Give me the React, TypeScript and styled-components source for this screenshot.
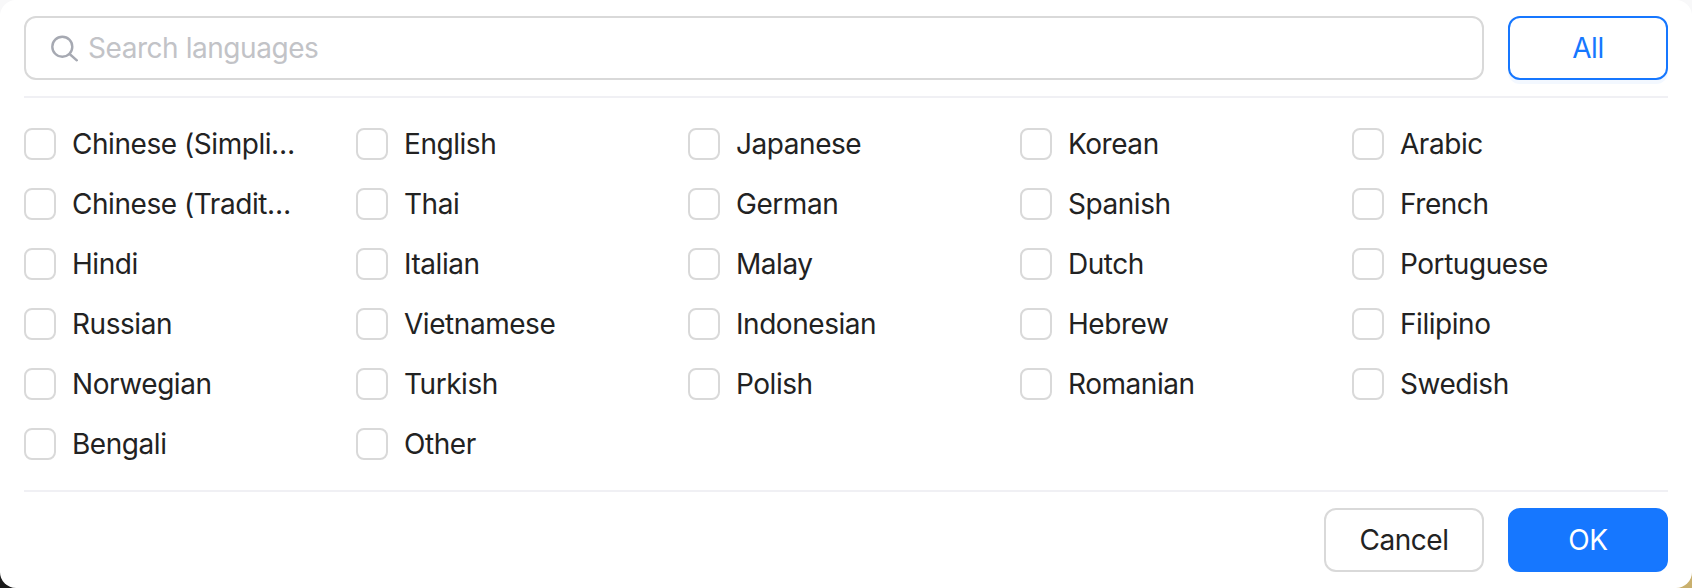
import React from "react";
import styled, { createGlobalStyle } from "styled-components";

const Global = createGlobalStyle`
  html, body { margin: 0; padding: 0; width: 1692px; height: 588px; overflow: hidden; background: #f8f8f9; }
  * { box-sizing: border-box; }
`;

const Backdrop = styled.div`
  position: relative;
  width: 1692px;
  height: 588px;
  background: #f8f8f9;
  overflow: hidden;
`;

const CornerLeft = styled.div`
  position: absolute; left: 0; bottom: 0; width: 24px; height: 24px; background: #1a1a1a;
`;
const CornerRight = styled.div`
  position: absolute; right: 0; bottom: 0; width: 24px; height: 24px; background: #c9b06e;
`;

const Dialog = styled.div`
  position: relative;
  width: 1692px;
  height: 588px;
  background: #fff;
  border-radius: 16px;
  padding: 16px 24px 0;
  font-family: Inter, "Liberation Sans", sans-serif;
  font-size: 28px;
  letter-spacing: -0.45px;
  color: #222;
`;

const SearchRow = styled.div`
  display: flex;
  gap: 24px;
  padding-bottom: 16px;
  border-bottom: 2px solid #f0f0f4;
`;

const SearchBox = styled.div`
  flex: 1;
  height: 64px;
  border: 2px solid #d9d9d9;
  border-radius: 12px;
  display: flex;
  align-items: center;
  padding: 0 24px;
  gap: 10px;
`;

const Placeholder = styled.span`
  color: #c2c3c7;
`;

const AllButton = styled.button`
  width: 160px;
  height: 64px;
  border: 2px solid #1677ff;
  border-radius: 12px;
  background: #fff;
  color: #1677ff;
  font: inherit;
  letter-spacing: inherit;
  box-shadow: 0 4px 0 rgba(22, 119, 255, 0.05);
`;

const Grid = styled.div`
  display: grid;
  grid-template-columns: repeat(5, 332px);
  grid-auto-rows: 60px;
  padding-top: 16px;
  height: 394px;
  border-bottom: 2px solid #f0f0f4;
`;

const Option = styled.label`
  display: flex;
  align-items: center;
  gap: 16px;
  min-width: 0;
  height: 60px;
`;

const Box = styled.span`
  flex: none;
  width: 32px;
  height: 32px;
  border: 2px solid #d9d9d9;
  border-radius: 8px;
  background: #fff;
`;

const Name = styled.span`
  width: 224px;
  white-space: nowrap;
  overflow: hidden;
  text-overflow: ellipsis;
`;

const Footer = styled.div`
  display: flex;
  justify-content: flex-end;
  gap: 24px;
  padding-top: 16px;
`;

const FooterButton = styled.button<{ $primary?: boolean }>`
  width: 160px;
  height: 64px;
  border-radius: 12px;
  font: inherit;
  letter-spacing: inherit;
  border: 2px solid ${(p) => (p.$primary ? "#1677ff" : "#d9d9d9")};
  background: ${(p) => (p.$primary ? "#1677ff" : "#fff")};
  color: ${(p) => (p.$primary ? "#fff" : "#222")};
`;

const languages = [
  "Chinese (Simplified)", "English", "Japanese", "Korean", "Arabic",
  "Chinese (Traditional)", "Thai", "German", "Spanish", "French",
  "Hindi", "Italian", "Malay", "Dutch", "Portuguese",
  "Russian", "Vietnamese", "Indonesian", "Hebrew", "Filipino",
  "Norwegian", "Turkish", "Polish", "Romanian", "Swedish",
  "Bengali", "Other",
];

export default function App() {
  return (
    <>
      <Global />
      <Backdrop>
        <CornerLeft />
        <CornerRight />
        <Dialog>
          <SearchRow>
            <SearchBox>
              <svg width="28" height="28" viewBox="0 0 28 28" fill="none" stroke="#a6a9b2" strokeWidth="2.4">
                <circle cx="12.3" cy="12.7" r="10" />
                <path d="M19.6 20l7.2 6.3" strokeLinecap="round" />
              </svg>
              <Placeholder>Search languages</Placeholder>
            </SearchBox>
            <AllButton>All</AllButton>
          </SearchRow>
          <Grid>
            {languages.map((l) => (
              <Option key={l}>
                <Box />
                <Name>{l}</Name>
              </Option>
            ))}
          </Grid>
          <Footer>
            <FooterButton>Cancel</FooterButton>
            <FooterButton $primary>OK</FooterButton>
          </Footer>
        </Dialog>
      </Backdrop>
    </>
  );
}
